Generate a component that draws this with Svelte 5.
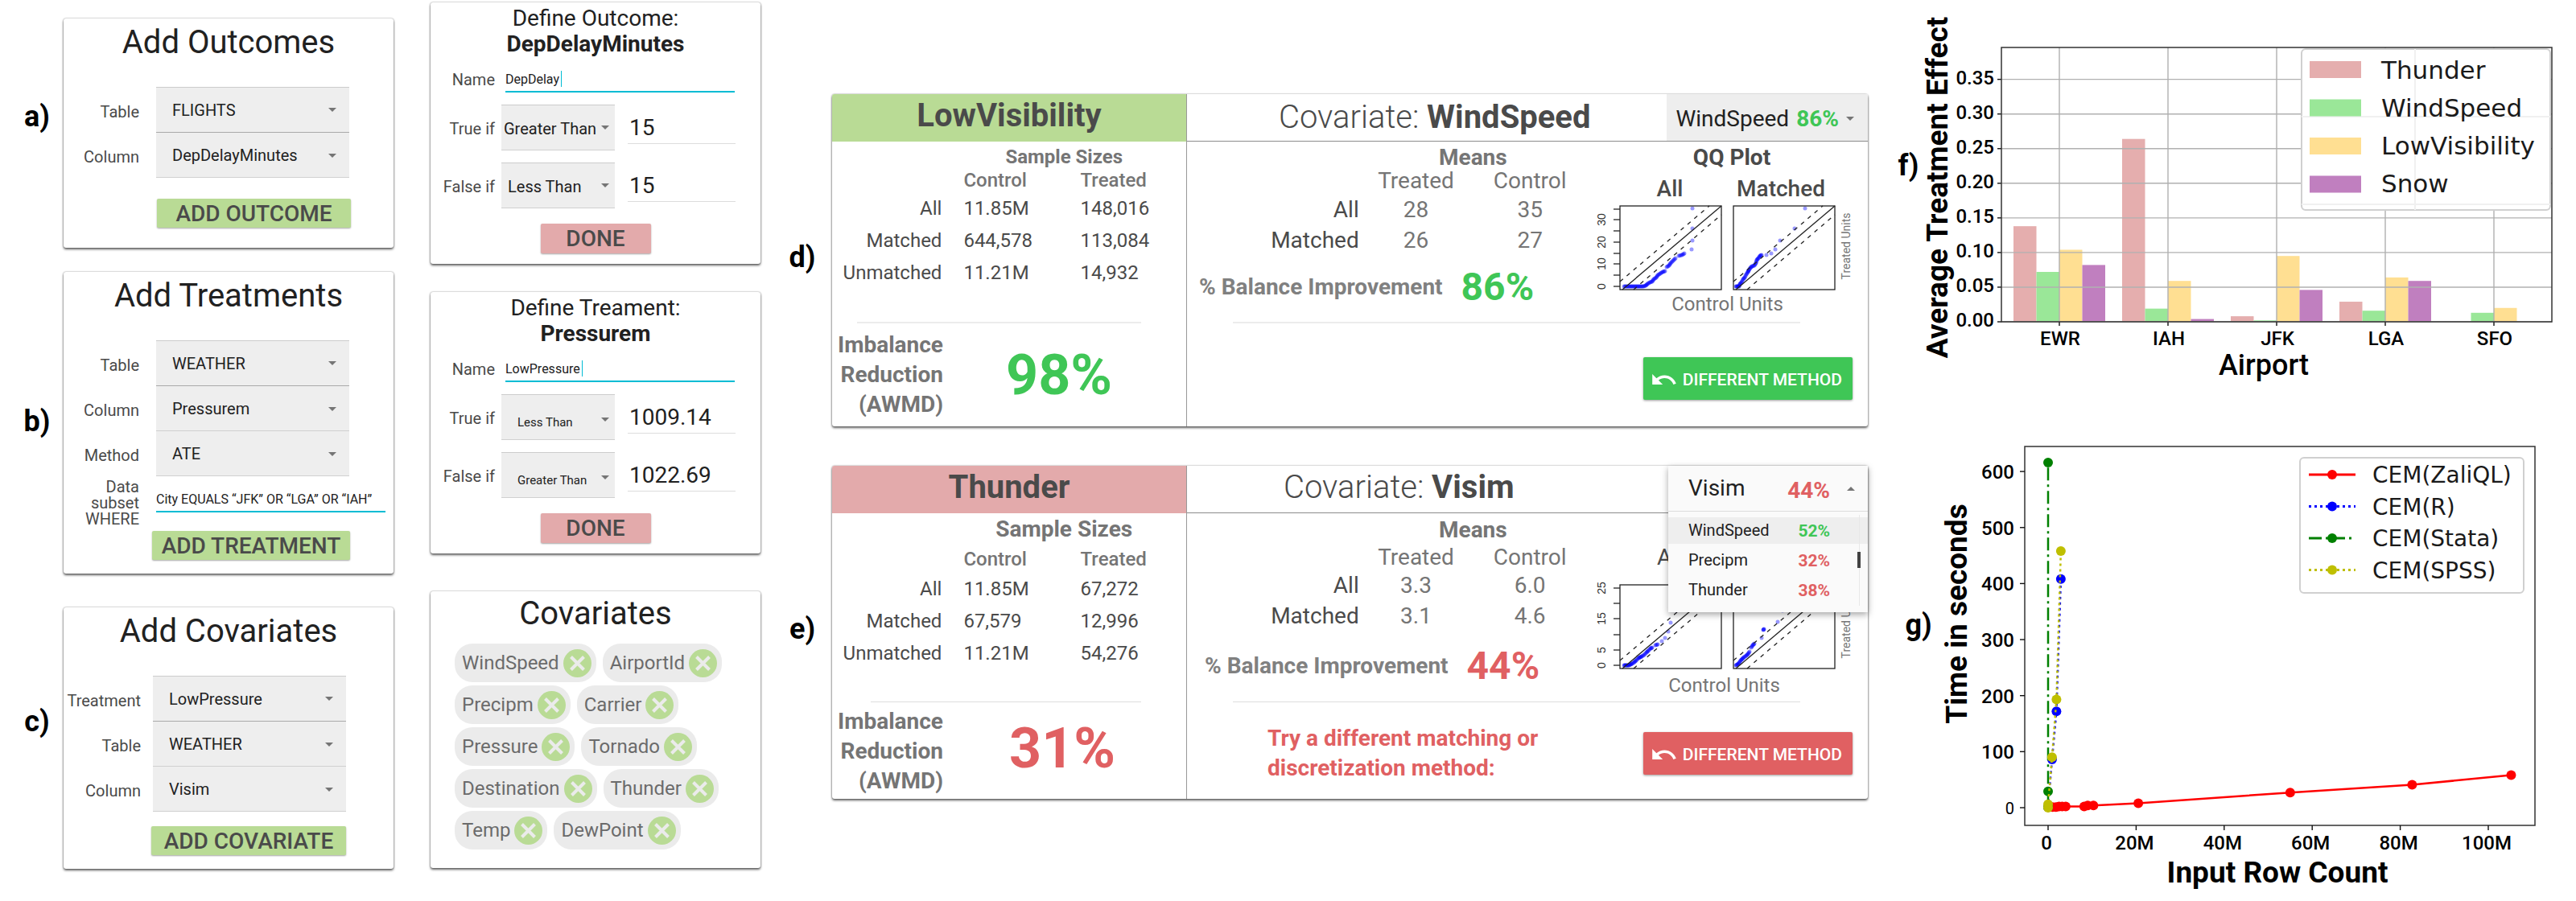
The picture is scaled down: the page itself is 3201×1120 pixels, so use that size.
<script>
  const setupCards = [
    {
      tag: 'a)',
      kind: 'outcome',
      title: 'Add Outcomes',
      action: 'ADD OUTCOME',
      fields: [
        { label: 'Table', value: 'FLIGHTS' },
        { label: 'Column', value: 'DepDelayMinutes' }
      ]
    },
    {
      tag: 'b)',
      kind: 'treatment',
      title: 'Add Treatments',
      action: 'ADD TREATMENT',
      fields: [
        { label: 'Table', value: 'WEATHER' },
        { label: 'Column', value: 'Pressurem' },
        { label: 'Method', value: 'ATE' }
      ],
      where: 'City EQUALS “JFK” OR “LGA” OR “IAH”'
    },
    {
      tag: 'c)',
      kind: 'covariate',
      title: 'Add Covariates',
      action: 'ADD COVARIATE',
      fields: [
        { label: 'Treatment', value: 'LowPressure' },
        { label: 'Table', value: 'WEATHER' },
        { label: 'Column', value: 'Visim' }
      ]
    }
  ];

  const defineCards = [
    {
      kind: 'roomy',
      title: 'Define Outcome:',
      subject: 'DepDelayMinutes',
      name: 'DepDelay',
      rules: [
        { label: 'True if', op: 'Greater Than', value: '15', tight: true },
        { label: 'False if', op: 'Less Than', value: '15' }
      ]
    },
    {
      kind: 'small',
      title: 'Define Treament:',
      subject: 'Pressurem',
      name: 'LowPressure',
      rules: [
        { label: 'True if', op: 'Less Than', value: '1009.14' },
        { label: 'False if', op: 'Greater Than', value: '1022.69' }
      ]
    }
  ];

  const chipRows = [
    ['WindSpeed', 'AirportId'],
    ['Precipm', 'Carrier'],
    ['Pressure', 'Tornado'],
    ['Destination', 'Thunder'],
    ['Temp', 'DewPoint']
  ];

  const results = [
    {
      tag: 'd)',
      tone: 'good',
      title: 'LowVisibility',
      covariate: 'WindSpeed',
      sizes: [
        ['All', '11.85M', '148,016'],
        ['Matched', '644,578', '113,084'],
        ['Unmatched', '11.21M', '14,932']
      ],
      reduction: '98%',
      means: [
        ['All', '28', '35'],
        ['Matched', '26', '27']
      ],
      balance: '86%',
      ticks: [[102, '0'], [88, ''], [74, '10'], [61, ''], [47, '20'], [33, ''], [19, '30'], [6, '']],
      left: [
        [46, 102], [49, 102], [52, 102], [55, 102], [58, 102], [61, 102], [64, 102], [67, 102], [70, 102], [73, 101],
        [75, 99], [78, 97], [81, 96], [83, 93], [86, 91], [88, 88], [91, 86], [94, 84], [97, 83], [99, 78],
        [102, 76], [104, 73], [107, 70], [110, 67], [114, 64], [118, 63], [121, 61], [130, 56], [131, 45], [131, 30], [131, 5]
      ],
      right: [
        [185, 102], [187, 102], [189, 102], [190, 99], [192, 97], [194, 93], [196, 91], [198, 87], [200, 84], [201, 82],
        [203, 79], [205, 77], [208, 76], [210, 73], [211, 69], [213, 67], [215, 64], [217, 63], [223, 63], [229, 61],
        [234, 56], [240, 45], [258, 30], [271, 5]
      ]
    },
    {
      tag: 'e)',
      tone: 'bad',
      title: 'Thunder',
      covariate: 'Visim',
      sizes: [
        ['All', '11.85M', '67,272'],
        ['Matched', '67,579', '12,996'],
        ['Unmatched', '11.21M', '54,276']
      ],
      reduction: '31%',
      means: [
        ['All', '3.3', '6.0'],
        ['Matched', '3.1', '4.6']
      ],
      balance: '44%',
      advice: 'Try a different matching or discretization method:',
      ticks: [[102, '0'], [83, '5'], [64, ''], [44, '15'], [25, ''], [6, '25']],
      left: [
        [46, 102], [48, 102], [50, 102], [52, 102], [54, 101], [56, 100], [59, 98], [61, 96], [64, 93], [66, 92],
        [68, 91], [71, 89], [74, 86], [76, 84], [79, 81], [81, 80], [85, 77], [88, 76], [93, 72], [97, 68],
        [101, 60], [104, 49], [111, 34]
      ],
      right: [
        [185, 102], [187, 101], [189, 99], [191, 96], [193, 94], [195, 92], [198, 90], [200, 88], [202, 85], [204, 80],
        [206, 77], [208, 75], [217, 68], [219, 58], [220, 57], [237, 48], [243, 34]
      ]
    }
  ];

  const menu = [
    { name: 'WindSpeed', score: '52%', good: true },
    { name: 'Precipm', score: '32%' },
    { name: 'Thunder', score: '38%' }
  ];

  const dense = (dots) =>
    dots.flatMap(([x, y], i) => {
      const [nx, ny] = dots[i + 1] ?? [x, y];
      const near = i + 1 < dots.length && Math.hypot(nx - x, ny - y) < 4.6;
      return near ? [0, 1, 2].map((k) => [x + ((nx - x) * k) / 3, y + ((ny - y) * k) / 3]) : [[x, y]];
    });

  // Bar chart
  const airports = ['EWR', 'IAH', 'JFK', 'LGA', 'SFO'];
  const barSeries = [
    { name: 'Thunder', color: '#e5aeae', values: [0.138, 0.264, 0.008, 0.029, 0] },
    { name: 'WindSpeed', color: '#9ae798', values: [0.072, 0.019, 0.002, 0.016, 0.013] },
    { name: 'LowVisibility', color: '#ffdf92', values: [0.104, 0.059, 0.095, 0.064, 0.02] },
    { name: 'Snow', color: '#c07fbf', values: [0.082, 0.004, 0.046, 0.059, 0] }
  ];
  const effectTicks = [0, 0.05, 0.1, 0.15, 0.2, 0.25, 0.3, 0.35];
  const airportX = (i) => 171 + i * 135;
  const effectY = (v) => 400 - v * 861;

  // Line chart
  const rowX = (m) => 141 + m * 5.47;
  const timeY = (s) => 504 - s * 0.6965;
  const timeSeries = [
    {
      name: 'CEM(ZaliQL)', color: '#ff0000', dash: 'none',
      points: [[0.1, 1], [1, 1], [1.8, 1], [2.5, 2], [3.2, 2], [4, 2], [8.2, 2], [9, 4], [10.3, 4], [20.5, 8], [55, 27], [82.7, 41], [105.2, 58]]
    },
    { name: 'CEM(R)', color: '#0000ff', dash: '3 4', points: [[0, 1], [0.9, 86], [1.9, 172], [2.9, 408]] },
    { name: 'CEM(Stata)', color: '#008000', dash: '16 5 3 5', points: [[0, 1], [0, 29], [0, 616]] },
    { name: 'CEM(SPSS)', color: '#bfbf00', dash: '3 4', points: [[0, 0], [0, 6], [0.9, 90], [1.9, 193], [2.9, 458]] }
  ];
  const path = (pts) => pts.map(([m, s]) => `${rowX(m)},${timeY(s)}`).join(' ');
</script>

{#snippet caret(up)}
  <svg class="arrow" viewBox="0 0 10 5" aria-hidden="true">
    <path d={up ? 'M0 5 5 0l5 5z' : 'M0 0h10L5 5z'} />
  </svg>
{/snippet}

<main>
  <div class="column setup">
    {#each setupCards as card, c}
      <section class="tagged">
        <span class="tag">{card.tag}</span>
        <form class="card {card.kind}">
          <h2>{card.title}</h2>
          <div class="fields">
            {#each card.fields as field, i}
              <div class="field">
                <label for="f{c}-{i}">{field.label}</label>
                <div class="pick">
                  <select id="f{c}-{i}"><option>{field.value}</option></select>
                  {@render caret(false)}
                </div>
              </div>
            {/each}
          </div>
          {#if card.where}
            <div class="where">
              <label for="where">Data subset WHERE</label>
              <input id="where" class="line" value={card.where} />
            </div>
          {/if}
          <button type="button" class="action">{card.action}</button>
        </form>
      </section>
    {/each}
  </div>

  <div class="column define">
    {#each defineCards as card, c}
      <form class="card {card.kind}">
        <h3>{card.title}<strong>{card.subject}</strong></h3>
        <div class="name">
          <label for="n{c}">Name</label>
          <div class="line">
            <input id="n{c}" value={card.name} size={card.name.length} />
            <i class="cursor"></i>
          </div>
        </div>
        {#each card.rules as rule, i}
          <div class="rule">
            <label for="r{c}-{i}">{rule.label}</label>
            <div class="pick" class:tight={rule.tight}>
              <select id="r{c}-{i}"><option>{rule.op}</option></select>
              {@render caret(false)}
            </div>
            <input aria-label="{rule.label} value" value={rule.value} />
          </div>
        {/each}
        <button type="button" class="action done">DONE</button>
      </form>
    {/each}

    <section class="card chips">
      <h2>Covariates</h2>
      {#each chipRows as row}
        <div class="chiprow">
          {#each row as chip}
            <span class="chip">
              {chip}
              <button type="button" aria-label="Remove {chip}">
                <svg viewBox="0 0 35 35" aria-hidden="true">
                  <circle cx="17.5" cy="17.5" r="17.5" />
                  <path d="M9.5 9.5 25.5 25.5M25.5 9.5 9.5 25.5" />
                </svg>
              </button>
            </span>
          {/each}
        </div>
      {/each}
    </section>
  </div>

  <div class="column results">
    {#each results as r}
      <section class="tagged">
        <span class="tag">{r.tag}</span>
        <article class="card result {r.tone}">
          <div class="side">
            <h2>{r.title}</h2>
            <div class="upper">
              <table class="sizes">
                <colgroup><col class="c1" /><col class="c2" /><col /></colgroup>
                <thead>
                  <tr class="group"><td></td><th colspan="2">Sample Sizes</th></tr>
                  <tr class="heads"><td></td><th>Control</th><th>Treated</th></tr>
                </thead>
                <tbody>
                  {#each r.sizes as [name, control, treated]}
                    <tr><th scope="row">{name}</th><td>{control}</td><td>{treated}</td></tr>
                  {/each}
                </tbody>
              </table>
            </div>
            <hr />
            <div class="reduction">
              <p>Imbalance<br />Reduction<br />(AWMD)</p>
              <b>{r.reduction}</b>
            </div>
          </div>

          <div class="detail">
            <header>
              <h2>Covariate: <strong>{r.covariate}</strong></h2>
              {#if r.tone === 'good'}
                <button type="button" class="toggle" aria-haspopup="listbox">
                  {r.covariate} <b>{r.balance}</b>
                  {@render caret(false)}
                </button>
              {:else}
                <div class="menu">
                  <button type="button" aria-haspopup="listbox" aria-expanded="true">
                    <span>{r.covariate}</span><b>{r.balance}</b>
                    {@render caret(true)}
                  </button>
                  <ul>
                    {#each menu as item, i}
                      <li class:active={i === 0}><span>{item.name}</span><b class:up={item.good}>{item.score}</b></li>
                    {/each}
                  </ul>
                  <i class="track"></i>
                </div>
              {/if}
            </header>

            <div class="upper split">
              <div>
                <table class="means">
                  <colgroup><col class="m1" /><col /><col /></colgroup>
                  <thead>
                    <tr class="group"><td></td><th colspan="2">Means</th></tr>
                    <tr class="heads"><td></td><th>Treated</th><th>Control</th></tr>
                  </thead>
                  <tbody>
                    {#each r.means as [name, treated, control]}
                      <tr><th scope="row">{name}</th><td>{treated}</td><td>{control}</td></tr>
                    {/each}
                  </tbody>
                </table>
                <p class="balance"><span>% Balance Improvement</span><b>{r.balance}</b></p>
              </div>
              <figure class="qq">
                <h4>QQ Plot</h4>
                <div class="pair"><span>All</span><span>Matched</span></div>
                <svg viewBox="0 0 349 108" role="img" aria-label="QQ plots of control and treated units">
                  {#each [[41, r.left], [182, r.right]] as [x, dots]}
                    {#each dense(dots) as [cx, cy]}
                      <circle {cx} {cy} r="2.5" />
                    {/each}
                    <g class="axes">
                      <rect {x} y="2" width="126" height="104" />
                      <path d="M{x + 3} 106 {x + 126} 2" />
                      <path class="dash" d="M{x} 96 {x + 111} 2M{x + 17} 106 {x + 126} 13" />
                    </g>
                  {/each}
                  {#each r.ticks as [y, text]}
                    <path class="tick" d="M33 {y}h8" />
                    {#if text}
                      <text class="num" transform="translate(23 {y}) rotate(-90)">{text}</text>
                    {/if}
                  {/each}
                  <text class="units" transform="translate(327 52) rotate(-90)">Treated Units</text>
                </svg>
                <figcaption>Control Units</figcaption>
              </figure>
            </div>
            <hr />
            <div class="foot">
              {#if r.advice}<p>{r.advice}</p>{/if}
              <button type="button">
                <svg viewBox="2 7 20.5 9" aria-hidden="true">
                  <path d="M12.5 8c-2.65 0-5.05.99-6.9 2.6L2 7v9h9l-3.62-3.62c1.39-1.16 3.16-1.88 5.12-1.88 3.54 0 6.55 2.31 7.6 5.5l2.37-.78C21.08 11.03 17.15 8 12.5 8z" />
                </svg>
                DIFFERENT METHOD
              </button>
            </div>
          </div>
        </article>
      </section>
    {/each}
  </div>

  <div class="column charts">
    <section class="tagged effect">
      <span class="tag">f)</span>
      <svg viewBox="0 0 813 500" role="img" aria-label="Average treatment effect by airport">
        {#each barSeries as s, k}
          {#each s.values as v, i}
            {#if v}
              <rect x={airportX(i) - 57 + k * 28.5} y={effectY(v)} width="28.5" height={400 - effectY(v)} fill={s.color} />
            {/if}
          {/each}
        {/each}
        {#each effectTicks as t}
          <path class="grid" d="M99 {effectY(t)}H783" />
          <path class="tickmark" d="M94 {effectY(t)}h5" />
          <text class="scale end" x="90" y={effectY(t) + 6}>{t.toFixed(2)}</text>
        {/each}
        {#each airports as a, i}
          <path class="grid" d="M{airportX(i)} 59V400" />
          <path class="tickmark" d="M{airportX(i)} 400v5" />
          <text class="scale mid" x={airportX(i) + 1} y="429">{a}</text>
        {/each}
        <rect class="frame" x="99" y="59" width="684" height="341" />
        <rect class="legend" x="472" y="61" width="309" height="200" rx="5" />
        <path class="ghost" d="M613 61v200M472 145h309M472 254h309" />
        {#each barSeries as s, k}
          <rect x="482" y={76 + k * 47.5} width="64" height="21" fill={s.color} />
          <text class="key big" x="571" y={98 + k * 47}>{s.name}</text>
        {/each}
        <text class="title mid" x="425" y="466">Airport</text>
        <text class="title heavy mid" transform="translate(32 233) rotate(-90)">Average Treatment Effect</text>
      </svg>
    </section>

    <section class="tagged timing">
      <span class="tag">g)</span>
      <svg viewBox="0 0 797 620" role="img" aria-label="Time in seconds by input row count">
        <rect class="frame" x="112" y="55" width="634" height="471" />
        {#each [0, 100, 200, 300, 400, 500, 600] as t}
          <path class="tickmark" d="M106 {timeY(t)}h6" />
          <text class="scale end" class:zero={t === 0} x="99" y={timeY(t) + (t ? 9 : 8)}>{t}</text>
        {/each}
        {#each [0, 20, 40, 60, 80, 100] as m}
          <path class="tickmark" d="M{rowX(m)} 526v6" />
          <text class="scale mid" x={rowX(m) - 2} y="556">{m ? `${m}M` : '0'}</text>
        {/each}
        {#each timeSeries as s}
          <polyline class="series" points={path(s.points)} stroke={s.color} stroke-dasharray={s.dash} />
          {#each s.points as [m, t]}
            <circle cx={rowX(m)} cy={timeY(t)} r="6" fill={s.color} />
          {/each}
        {/each}
        <rect class="legend" x="454" y="69" width="278" height="168" rx="5" />
        {#each timeSeries as s, k}
          <path class="series thick" d="M465 {90 + k * 39.5}h58" stroke={s.color} stroke-dasharray={s.dash} />
          <circle cx="494" cy={90 + k * 39.5} r="6" fill={s.color} />
          <text class="key" x="544" y={100 + k * 39.5}>{s.name}</text>
        {/each}
        <text class="title heavy mid" x="426" y="597">Input Row Count</text>
        <text class="title heavy mid" transform="translate(40 263) rotate(-90)">Time in seconds</text>
      </svg>
    </section>
  </div>
</main>

<style>
  :global(body) {
    margin: 0;
    background: #fff;
  }

  main {
    --green: #b9db95;
    --pink: #e3aaab;
    --ink: #212121;
    --dark: #4a4a4a;
    --grey: #757575;
    display: grid;
    grid-template-columns: 489fr 46fr 410fr 1376fr 880fr;
    align-items: start;
    font-family: Roboto, 'Liberation Sans', sans-serif;
    font-size: 20px;
    color: var(--ink);
  }

  .setup { grid-column: 1; }
  .define { grid-column: 3; }
  .results { grid-column: 4; }
  .charts { grid-column: 5; }

  .column {
    display: flex;
    flex-direction: column;
    min-width: 0;
  }

  h2, h3, h4, p, ul, figure {
    margin: 0;
    padding: 0;
    font-weight: 400;
  }

  input, select, button {
    font: inherit;
    color: inherit;
    border: 0;
    border-radius: 0;
    margin: 0;
    padding: 0;
    background: none;
    min-width: 0;
    box-sizing: border-box;
    outline: 0;
  }

  .tagged {
    display: grid;
    align-items: center;
  }

  .tag {
    font-size: 36px;
    font-weight: 700;
    color: #000;
    text-align: center;
  }

  .card {
    background: #fff;
    border-radius: 3px;
    box-shadow: 0 2px 3px rgba(0, 0, 0, 0.6), 0 0 2px rgba(0, 0, 0, 0.45);
  }

  /* Setup forms */
  .setup { padding-top: 23px; }
  .setup .tagged { grid-template-columns: 79fr 410fr; }
  .setup .tagged:nth-child(2) { margin-top: 30px; }
  .setup .tagged:nth-child(3) { margin-top: 42px; }
  .setup .tag { padding: 0 0 42px 13px; }
  .setup .tagged:nth-child(2) .tag { padding-bottom: 4px; }

  .card > h2 {
    padding-top: 2px;
    font-size: 40px;
    line-height: 56px;
    text-align: center;
  }

  label { color: var(--dark); text-align: right; }

  .setup .card {
    --label: 94px;
    --gap: 21px;
    --pull: 55px;
    --inset: 116px;
    --outset: 53px;
    padding-bottom: 25px;
  }
  .setup .treatment { --inset: 110px; --outset: 54px; padding-bottom: 17px; }
  .setup .covariate {
    --label: 96px;
    --gap: 15px;
    --pull: 59px;
    --inset: 109px;
    --outset: 59px;
    padding-bottom: 17px;
  }

  .fields { padding-top: 27px; }

  .field, .where {
    display: grid;
    grid-template-columns: var(--label) minmax(0, 1fr);
    column-gap: var(--gap);
    align-items: center;
    padding-right: var(--pull);
  }

  .field label { padding-top: 4px; }

  .pick { display: grid; align-items: center; }
  .pick > :global(*) { grid-area: 1 / 1; }

  select {
    appearance: none;
    width: 100%;
    height: 56px;
    padding: 0 20px;
    background: #eee;
    border-bottom: 1px solid #d0d0d0;
  }
  .field:first-child select {
    height: 57px;
    border-top: 1px solid #ccc;
    border-bottom-color: #aaa;
  }

  .arrow {
    width: 10px;
    height: 5px;
    fill: #757575;
    pointer-events: none;
    justify-self: end;
    margin-right: 16px;
  }

  .where {
    line-height: 20px;
    padding: 3px 10px 0 0;
  }
  .where .line { margin-bottom: 8px; }

  .line {
    height: 32px;
    font-size: 16px;
    border-bottom: 2px solid #00bcd4;
    box-sizing: border-box;
  }

  .action {
    display: block;
    width: calc(100% - var(--inset) - var(--outset));
    height: 36px;
    margin: 26px 0 0 var(--inset);
    padding-top: 1px;
    font-size: 28px;
    font-weight: 500;
    line-height: 36px;
    white-space: nowrap;
    color: var(--dark);
    background: var(--green);
    border-radius: 2px;
    box-shadow: 0 1px 2px rgba(0, 0, 0, 0.35);
  }
  .treatment .action { margin-top: 5px; }
  .covariate .action { margin-top: 18px; }

  /* Definition forms */
  .define { padding-top: 3px; }
  .define .card + .card { margin-top: 35px; }
  .define .card.chips { margin-top: 47px; }
  .define form { padding: 4px 0 13px; }

  h3 {
    font-size: 28px;
    line-height: 32px;
    text-align: center;
  }
  h3 strong { display: block; font-weight: 700; }

  .name {
    display: grid;
    grid-template-columns: 80px minmax(0, 1fr);
    column-gap: 13px;
    align-items: center;
    padding-right: 32px;
    margin-top: 12px;
  }
  .name .line { display: flex; align-items: center; }
  .name input { field-sizing: content; }
  .cursor { width: 1px; height: 20px; margin-left: 2px; background: #00bcd4; }

  .rule {
    display: grid;
    grid-template-columns: 80px minmax(0, 165fr) minmax(0, 134fr);
    align-items: center;
    padding-right: 31px;
    margin-top: 15px;
  }
  .rule label { padding-top: 3px; }
  .rule .pick { margin: 0 16px 0 8px; }
  .rule select {
    height: 57px;
    padding: 2px 0 0 8px;
    border-top: 1px solid #ccc;
  }
  .rule .arrow { margin-right: 7px; }
  .rule .tight select { padding-left: 3px; }
  .small .rule select { padding: 12px 0 0 20px; font-size: 15px; }
  .small .rule .arrow { margin-top: 6px; }
  .rule input {
    height: 41px;
    padding: 0 2px;
    font-size: 28px;
    border-bottom: 1px solid #ddd;
  }

  .done {
    width: 137px;
    height: 37px;
    margin: 19px auto 0;
    padding: 0;
    background: var(--pink);
  }

  .chips { padding-bottom: 23px; }
  .chips h2 { padding-top: 0; margin-bottom: 9px; }
  .chiprow {
    display: flex;
    gap: 8px;
    padding-left: 30px;
    margin-bottom: 4px;
  }
  .chiprow:last-child { margin-bottom: 0; }
  .chip {
    display: flex;
    align-items: center;
    gap: 5px;
    height: 48px;
    padding: 0 6px 0 9px;
    font-size: 24px;
    color: #6b6b6b;
    background: #ebebeb;
    border-radius: 22px;
  }
  .chip button, .chip svg { display: block; width: 35px; height: 35px; }
  .chip circle { fill: var(--green); }
  .chip path { stroke: #ebebeb; stroke-width: 4; fill: none; }

  /* Result cards */
  .results { padding-top: 117px; }
  .results .tagged { grid-template-columns: 89fr 1287fr; }
  .results .tagged + .tagged { margin-top: 49px; }
  .results .tag { padding: 0 0 8px 15px; }

  .result {
    --tone: #3fc656;
    --head: var(--green);
    --upper: 224px;
    --group: 37px;
    --heads: 26px;
    --nudge: 4px;
    --mgroup: 40px;
    --mheads: 26px;
    --mnudge: 8px;
    --foot: 42px;
    --rule: 31px;
    --indent: 15px;
    --lift: 10px;
    display: grid;
    grid-template-columns: 441fr 846fr;
    color: var(--dark);
  }
  .result.bad {
    --tone: #e06062;
    --head: var(--pink);
    --upper: 234px;
    --group: 39px;
    --heads: 35px;
    --nudge: 0px;
    --mgroup: 42px;
    --mheads: 29px;
    --mnudge: 4px;
    --foot: 37px;
    --rule: 48px;
    --indent: 22px;
    --lift: 14px;
  }

  .side { border-right: 1px solid #999; }
  .side h2 {
    font-size: 40px;
    font-weight: 700;
    line-height: 54px;
    padding-bottom: 5px;
    text-align: center;
    background: var(--head);
    border-radius: 3px 0 0 0;
  }

  .upper { min-height: var(--upper); }
  .result b { font-weight: 700; color: var(--tone); }

  table {
    width: 100%;
    table-layout: fixed;
    border-collapse: collapse;
    font-size: 24px;
    line-height: 20px;
  }
  th, td { padding: 0; font-weight: 400; text-align: left; }
  thead th { color: var(--grey); }
  tbody th { text-align: right; }
  .group { height: var(--group); }
  .group th { font-weight: 700; text-align: center; }
  .heads { height: var(--heads); }
  .heads th { padding-bottom: var(--nudge); }

  .c1 { width: 31%; }
  .c2 { width: 33%; }
  .sizes th + td, .sizes td + td, .heads th { padding-left: 27px; }
  .sizes .heads th { font-weight: 500; }
  .sizes tbody tr { height: 40px; }
  .bad .sizes .group th { font-size: 28px; }

  .means { font-size: 28px; line-height: 18px; }
  .m1 { width: 43%; }
  .means .group { height: var(--mgroup); }
  .means .heads { height: var(--mheads); }
  .means .heads th { padding: 0 0 var(--mnudge); text-align: center; }
  .means tbody tr { height: 38px; }
  .means tbody td { text-align: center; color: var(--grey); }

  hr {
    height: 2px;
    margin: 0 56px 0 var(--rule);
    border: 0;
    background: #ececec;
  }
  .detail hr { margin: 0 84px 0 57px; }
  .bad hr { height: 1px; background: #ddd; }

  .reduction {
    display: flex;
    align-items: center;
    padding: 8px 0 9px;
  }
  .bad .reduction { padding: 5px 0 4px; }
  .reduction p {
    width: 138px;
    font-size: 28px;
    font-weight: 700;
    line-height: 37px;
    text-align: right;
    color: var(--grey);
  }
  .reduction b { padding-left: 78px; font-size: 70px; line-height: 80px; }
  .bad .reduction b { padding: 0 0 8px 82px; }

  .detail header {
    display: flex;
    justify-content: space-between;
    height: 58px;
    border-bottom: 1px solid #8c8c8c;
    position: relative;
  }
  .detail h2 {
    padding-left: 114px;
    font-size: 40px;
    font-weight: 300;
    line-height: 57px;
    white-space: nowrap;
  }
  .bad .detail h2 { padding-left: 120px; line-height: 53px; }
  .detail h2 strong { font-weight: 700; }

  .toggle {
    display: flex;
    align-items: center;
    gap: 9px;
    padding: 2px 1px 0 11px;
    font-size: 28px;
    color: var(--ink);
    background: #eee;
  }

  .menu {
    position: absolute;
    top: 0;
    right: 0;
    width: 248px;
    padding-bottom: 9px;
    color: var(--ink);
    background: #fafafa;
    box-shadow: 0 3px 8px rgba(0, 0, 0, 0.35);
    z-index: 1;
  }
  .menu button {
    display: grid;
    grid-template-columns: 1fr auto 47px;
    align-items: center;
    width: 100%;
    height: 57px;
    padding-left: 25px;
    font-size: 28px;
    text-align: left;
    border-bottom: 1px solid #ddd;
  }
  .menu span { padding-bottom: 2px; }
  .menu button b { padding-top: 4px; }
  .menu ul { list-style: none; padding-top: 5px; }
  .menu li {
    display: flex;
    justify-content: space-between;
    align-items: center;
    height: 37px;
    padding: 0 47px 0 25px;
    font-size: 20px;
  }
  .menu li b { font-size: 21px; }
  .menu li b.up { color: #3fc656; }
  .menu li.active {
    background: linear-gradient(#eee, #eee) 0 2px / 100% 33px no-repeat;
  }
  .track {
    position: absolute;
    top: 61px;
    bottom: 8px;
    right: 9px;
    width: 4px;
    background:
      linear-gradient(#424242, #424242) 0 46px / 4px 20px no-repeat,
      linear-gradient(#e8e8e8, #e8e8e8) 2px 0 / 1px 100% no-repeat;
  }

  .split { display: grid; grid-template-columns: 497fr 349fr; }

  .balance {
    display: flex;
    align-items: center;
    gap: 23px;
    height: 56px;
    margin-top: var(--lift);
    padding-left: var(--indent);
    white-space: nowrap;
  }
  .balance span { font-size: 28px; font-weight: 700; color: #808080; }
  .balance b { font-size: 48px; }

  .qq { text-align: center; font-size: 28px; }
  .qq h4 { padding-left: 11px; font-weight: 700; line-height: 40px; }
  .pair {
    display: grid;
    grid-template-columns: 1fr 1fr;
    padding: 0 39px 0 34px;
    line-height: 38px;
    font-weight: 500;
  }
  .bad .pair { line-height: 29px; padding-bottom: 18px; font-weight: 400; }
  /* The open menu covers these headings. */
  .bad h4, .bad .pair span + span { visibility: hidden; }
  .qq svg { display: block; width: 100%; overflow: visible; }
  .axes rect, .axes path, .tick { fill: none; stroke: #222; stroke-width: 1.3; }
  .axes .dash { stroke-dasharray: 5 6; }
  .qq circle { fill: #0000ff; fill-opacity: 0.4; }
  .num, .units { text-anchor: middle; font-size: 14px; fill: #333; }
  .num { font-family: 'Liberation Sans', sans-serif; }
  .units { fill: var(--grey); }
  figcaption { font-size: 24px; line-height: 33px; color: var(--grey); }
  .bad figcaption { line-height: 39px; padding-right: 8px; }

  .foot {
    display: flex;
    align-items: flex-start;
    justify-content: flex-end;
    padding-right: 19px;
  }
  .foot p {
    flex: 1;
    max-width: 360px;
    margin: 26px auto 0 100px;
    font-size: 28px;
    font-weight: 700;
    line-height: 37px;
    color: var(--tone);
  }
  .foot button {
    display: flex;
    align-items: center;
    gap: 8px;
    height: 53px;
    margin-top: var(--foot);
    padding: 2px 13px 0 11px;
    font-size: 21px;
    font-weight: 500;
    white-space: nowrap;
    color: #fff;
    background: var(--tone);
    border-radius: 2px;
    box-shadow: 0 1px 3px rgba(0, 0, 0, 0.4);
  }
  .foot svg { width: 30px; height: 13px; fill: #fff; }

  /* Charts */
  .effect { grid-template-columns: 67fr 813fr; }
  .timing { grid-template-columns: 83fr 797fr; }
  .effect .tag { padding: 0 0 88px 34px; }
  .timing .tag { padding: 0 0 66px 43px; }
  .charts svg { display: block; width: 100%; }

  .grid { stroke: #b0b0b0; stroke-width: 1.4; }
  .tickmark { stroke: #111; stroke-width: 1.4; }
  .frame { fill: none; stroke: #333; stroke-width: 1.5; }
  .legend { fill: #fff; stroke: #d0d0d0; stroke-width: 2; }
  .ghost { stroke: #f0f0f0; stroke-width: 2; }
  .scale { font-size: 24px; font-weight: 500; fill: #000; }
  .scale.zero { font-size: 20px; font-weight: 400; }
  .mid { text-anchor: middle; }
  .end { text-anchor: end; }
  .title { font-size: 36px; font-weight: 500; fill: #000; }
  .title.heavy { font-size: 37px; font-weight: 700; }
  .key { font-family: 'DejaVu Sans', sans-serif; font-size: 28px; fill: #1a1a1a; }
  .key.big { font-size: 31px; }
  .series { fill: none; stroke-width: 2.5; }
  .series.thick { stroke-width: 3; }
</style>
